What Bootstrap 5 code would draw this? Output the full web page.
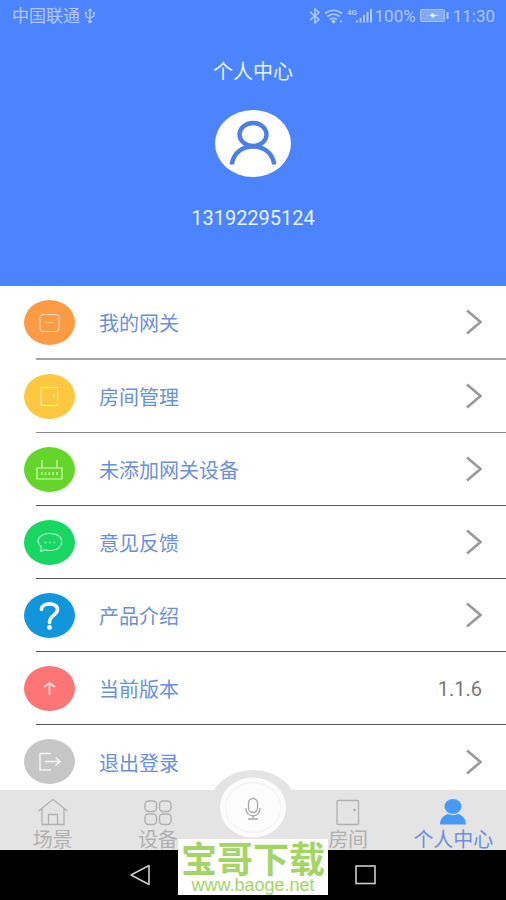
<!DOCTYPE html>
<html lang="zh-CN">
<head>
<meta charset="utf-8">
<meta name="viewport" content="width=device-width, initial-scale=1">
<title>个人中心</title>
<link href="https://cdn.jsdelivr.net/npm/bootstrap@5.3.0/dist/css/bootstrap.min.css" rel="stylesheet">
<style>
body{font-family:Roboto,"Noto Sans CJK SC",sans-serif;font-size:20px;line-height:24px;background:#fff}
svg{display:block;flex:none}
a{text-decoration:none}
.hero{background:#4c83ff;padding-bottom:56px}
.status{font-size:17px;height:31px;padding:0 11px 0 12px;color:#b0c9ff}
.page-title{font-size:20px;line-height:24px;margin:29px 0 26px;color:#e6f2ff}
.phone{margin-top:29px;color:#e6f2ff}
.entry{height:73px;margin-left:36px;padding-right:24px;border-bottom:1px solid #555;color:#6a90dc}
.entry:first-child{height:74px;border-bottom:2px solid #a3a3a3}
.entry:nth-child(2){border-color:#8a8a8a}
.entry:last-child{border-bottom:0}
.entry-icon{margin-left:-12px;margin-right:24px}
.entry-label{padding-top:4px}
.version{color:#777;padding-top:2px}
.tabs{background:#e4e4e4;height:60px}
.tab{color:#b0b0b0;flex:1 1 0;padding-top:8px}
.tab.current{color:#6a90dc}
.tab svg{margin-bottom:2px}
.mic-slot{width:85px}
.mic{left:50%;top:-20px;transform:translateX(-50%)}
.sysnav{background:#000;height:50px;gap:92px}
.stamp{left:50%;bottom:5px;transform:translateX(-50%);width:150px;height:56px;background:#fff;color:#a3d468;z-index:3}
.stamp-name{font:700 36px/36px "Noto Sans CJK SC",sans-serif}
.stamp-url{font:18px/20px "Liberation Sans",sans-serif}
</style>
</head>
<body>
<div class="vh-100 d-flex flex-column overflow-hidden position-relative">
  <header class="hero d-flex flex-column align-items-center flex-shrink-0">
    <div class="status w-100 d-flex align-items-center">
      <span>中国联通</span>
      <svg class="ms-1" width="12" height="16" viewBox="0 0 12 16" fill="none" stroke="#b0c9ff" stroke-width="1.3"><path d="M6 2v12M2 5v3.500L6 11M10 4.500V8L6 10M4.500 3L6 1l1.500 2"/><circle cx="6" cy="13.500" r="1.200" fill="#b0c9ff"/><path d="M1 5h2M9 5h2" stroke-width="2"/></svg>
      <svg class="ms-auto" width="12" height="16" viewBox="0 0 12 16" fill="none" stroke="#b0c9ff" stroke-width="1.500"><path d="M1 4l9 7.500L6 15V1l4 3.500L1 12"/></svg>
      <svg class="ms-1" width="20" height="16" viewBox="0 0 20 16" fill="none" stroke="#b0c9ff" stroke-width="1.700"><path d="M0 5.500Q8.500-1 17 5.500M2.500 8.500q6-4.500 12 0M5 11.500q3.500-2.500 7 0"/><circle cx="8.500" cy="13.500" r="1" fill="#b0c9ff"/><path d="M16 12.500v2" stroke-width="2"/></svg>
      <svg width="30" height="16" viewBox="0 0 30 16" fill="none" stroke="#b0c9ff"><text x="2" y="7" font-size="8" font-weight="700" fill="#b0c9ff" stroke="none">4G</text><path d="M12 12.500v2M15.500 10v4.500M19 7v7.500M22.500 4v10.500M26 1v13.500" stroke-width="2"/></svg>
      <span>100%</span>
      <svg class="mx-1" width="29" height="13" viewBox="0 0 29 13"><rect x=".5" y=".5" width="24" height="12" rx="1" fill="#83a9ff" stroke="#a6c2ff"/><path d="M5 6.500h5l2-2.500 3 2h5l-5 1-2 2-2-2z" fill="#e6f2ff"/><path d="M27.500 3v7" stroke="#b0c9ff" stroke-width="2"/></svg>
      <span>11:30</span>
    </div>
    <h1 class="page-title fw-normal">个人中心</h1>
    <svg width="76" height="67" viewBox="0 0 76 67"><ellipse cx="38" cy="33.500" rx="38" ry="33.500" fill="#fff"/><g fill="none" stroke="#4b7fe8" stroke-width="4.400"><ellipse cx="38" cy="24.500" rx="13.500" ry="11.500"/><path d="M17 54.500V53C19 43 27 36.500 38 36.500S57 43 59 53v1.500"/></g></svg>
    <div class="phone">13192295124</div>
  </header>

  <main class="flex-fill overflow-hidden">
    <a href="#" class="entry d-flex align-items-center">
      <svg class="entry-icon" width="51" height="45" viewBox="0 0 51 45" fill="none" stroke="#ffe0c0"><ellipse cx="25.500" cy="22.500" rx="25.500" ry="22.500" fill="#fc9b43" stroke="none"/><rect x="16" y="14.500" width="19" height="17" rx="3"/><path d="M21 22.500h9" stroke-dasharray="2 1"/></svg>
      <span class="entry-label flex-fill">我的网关</span>
      <svg width="16" height="26" viewBox="0 0 16 26" fill="none" stroke="#999" stroke-width="2.600"><path d="M1 1.500L14.500 13 1 24.500"/></svg>
    </a>
    <a href="#" class="entry d-flex align-items-center">
      <svg class="entry-icon" width="51" height="45" viewBox="0 0 51 45" fill="none" stroke="#fff0b8"><ellipse cx="25.500" cy="22.500" rx="25.500" ry="22.500" fill="#fdc83f" stroke="none"/><rect x="17" y="13.500" width="16.500" height="18"/><path d="M30 20v3" stroke-width="1.500"/></svg>
      <span class="entry-label flex-fill">房间管理</span>
      <svg width="16" height="26" viewBox="0 0 16 26" fill="none" stroke="#999" stroke-width="2.600"><path d="M1 1.500L14.500 13 1 24.500"/></svg>
    </a>
    <a href="#" class="entry d-flex align-items-center">
      <svg class="entry-icon" width="51" height="45" viewBox="0 0 51 45" fill="none" stroke="#dcf8c4" stroke-width="1.200"><ellipse cx="25.500" cy="22.500" rx="25.500" ry="22.500" fill="#64d52a" stroke="none"/><path d="M13 21h25v11H13zM18 13v8M33 13v8"/><path d="M17 26.500h17" stroke-width="3" stroke-dasharray="1.500 2.300"/></svg>
      <span class="entry-label flex-fill">未添加网关设备</span>
      <svg width="16" height="26" viewBox="0 0 16 26" fill="none" stroke="#999" stroke-width="2.600"><path d="M1 1.500L14.500 13 1 24.500"/></svg>
    </a>
    <a href="#" class="entry d-flex align-items-center">
      <svg class="entry-icon" width="51" height="45" viewBox="0 0 51 45" fill="none" stroke="#c2f5d6" stroke-width="1.200"><ellipse cx="25.500" cy="22.500" rx="25.500" ry="22.500" fill="#17d661" stroke="none"/><path d="M16.500 31.500l1-4.500C9 19 18 13.500 26 13.500c16 0 15.500 17 0 17-3 0-4-.5-5-.8z"/><path d="M20.500 22.500h11" stroke-width="1.700" stroke-dasharray="1.700 2.800"/></svg>
      <span class="entry-label flex-fill">意见反馈</span>
      <svg width="16" height="26" viewBox="0 0 16 26" fill="none" stroke="#999" stroke-width="2.600"><path d="M1 1.500L14.500 13 1 24.500"/></svg>
    </a>
    <a href="#" class="entry d-flex align-items-center">
      <svg class="entry-icon" width="51" height="45" viewBox="0 0 51 45" fill="none" stroke="#fff" stroke-width="3.600"><ellipse cx="25.500" cy="22.500" rx="25.500" ry="22.500" fill="#1296db" stroke="none"/><path d="M17.500 16.500c0-7.500 16-7.500 16 0 0 5.500-8 6-8 13" stroke-linecap="round"/><circle cx="25.500" cy="34.500" r="2.400" fill="#fff" stroke="none"/></svg>
      <span class="entry-label flex-fill">产品介绍</span>
      <svg width="16" height="26" viewBox="0 0 16 26" fill="none" stroke="#999" stroke-width="2.600"><path d="M1 1.500L14.500 13 1 24.500"/></svg>
    </a>
    <a href="#" class="entry d-flex align-items-center">
      <svg class="entry-icon" width="51" height="45" viewBox="0 0 51 45" fill="none" stroke="#ffe4e4" stroke-width="1.700"><ellipse cx="25.500" cy="22.500" rx="25.500" ry="22.500" fill="#fe7575" stroke="none"/><path d="M25.500 29V17.500M20 21l5.500-4 5.500 4"/></svg>
      <span class="entry-label flex-fill">当前版本</span>
      <span class="version">1.1.6</span>
    </a>
    <a href="#" class="entry d-flex align-items-center">
      <svg class="entry-icon" width="51" height="45" viewBox="0 0 51 45" fill="none" stroke="#f5f5f5" stroke-width="1.500"><ellipse cx="25.500" cy="22.500" rx="25.500" ry="22.500" fill="#c6c6c6" stroke="none"/><path d="M27 14.500H16v16.500h11M21 22.500h15M31.500 18.500l4.500 4-4.500 4"/></svg>
      <span class="entry-label flex-fill">退出登录</span>
      <svg width="16" height="26" viewBox="0 0 16 26" fill="none" stroke="#999" stroke-width="2.600"><path d="M1 1.500L14.500 13 1 24.500"/></svg>
    </a>
  </main>

  <nav class="tabs d-flex flex-shrink-0 position-relative">
    <a href="#" class="tab d-flex flex-column align-items-center">
      <svg width="30" height="28" viewBox="0 0 30 28" fill="none" stroke="#b0b0b0" stroke-width="1.300"><path d="M.5 13L15 1.500 29.500 13M4 10.500V26.500H26V10.500M10.500 26.500v-10h9v10"/></svg>
      <span>场景</span>
    </a>
    <a href="#" class="tab d-flex flex-column align-items-center">
      <svg width="28" height="28" viewBox="0 0 28 28" fill="none" stroke="#b0b0b0" stroke-width="1.400"><rect x="1" y="3" width="11.500" height="10.500" rx="3.500"/><rect x="15.500" y="3" width="11.500" height="10.500" rx="3.500"/><rect x="1" y="16" width="11.500" height="10.500" rx="3.500"/><rect x="15.500" y="16" width="11.500" height="10.500" rx="3.500"/></svg>
      <span>设备</span>
    </a>
    <div class="mic-slot"></div>
    <a href="#" class="tab d-flex flex-column align-items-center">
      <svg width="24" height="28" viewBox="0 0 24 28" fill="none" stroke="#b0b0b0" stroke-width="1.300"><rect x="1" y="2.500" width="21.500" height="24" rx="1"/><circle cx="18.500" cy="12" r=".8"/></svg>
      <span>房间</span>
    </a>
    <a href="#" class="tab current d-flex flex-column align-items-center" aria-current="page">
      <svg width="28" height="28" viewBox="0 0 28 28" fill="#4699f7"><ellipse cx="14" cy="8.500" rx="8.500" ry="7.500"/><path d="M1 26.500c0-6 4-9.500 8-10.500 3 1.500 7 1.500 10 0 4 1 8 4.500 8 10.500z"/></svg>
      <span>个人中心</span>
    </a>
    <button type="button" class="mic position-absolute border-0 p-0 bg-transparent" aria-label="语音">
      <svg width="88" height="74" viewBox="0 0 88 74"><ellipse cx="44" cy="37" rx="44" ry="37" fill="#e4e4e4"/><ellipse cx="44" cy="37.500" rx="33" ry="30" fill="#fcfcfc"/><ellipse cx="44" cy="37.500" rx="27.500" ry="25" fill="none" stroke="#f4f4f4" stroke-width="1.500"/><g fill="none" stroke="#a8a8a8" stroke-width="1.300"><rect x="39.500" y="28.500" width="9" height="14" rx="4.500"/><path d="M37 38c0 10.500 14 10.500 14 0M44 46v3M39 49h10"/></g></svg>
    </button>
  </nav>

  <div class="sysnav d-flex align-items-center justify-content-center flex-shrink-0">
    <svg width="21" height="22" viewBox="0 0 21 22" fill="none" stroke="#ccc" stroke-width="1.600" stroke-linejoin="round"><path d="M19 1.500v19L1 11z"/></svg>
    <svg width="20" height="20" viewBox="0 0 20 20" fill="none" stroke="#ccc" stroke-width="1.600"><circle cx="10" cy="10" r="9"/></svg>
    <svg width="21" height="20" viewBox="0 0 21 20" fill="none" stroke="#ccc" stroke-width="1.600"><rect x="1" y="1" width="19" height="17.500"/></svg>
  </div>

  <div class="stamp position-absolute text-center text-nowrap">
    <div class="stamp-name">宝哥下载</div>
    <div class="stamp-url">www.baoge.net</div>
  </div>
</div>
<script src="https://cdn.jsdelivr.net/npm/bootstrap@5.3.0/dist/js/bootstrap.bundle.min.js"></script>
</body>
</html>
